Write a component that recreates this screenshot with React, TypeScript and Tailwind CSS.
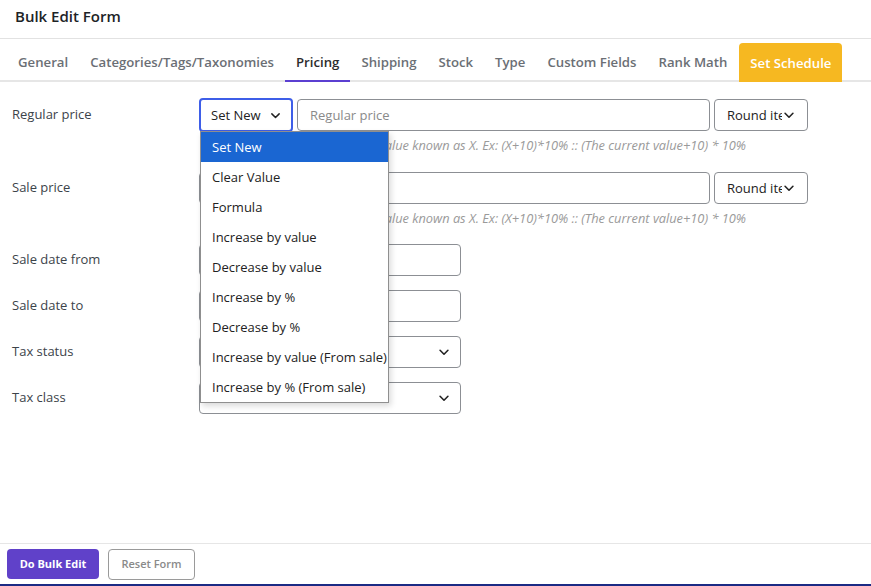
import React from "react";

const Chevron = ({ className = "" }: { className?: string }) => (
  <svg viewBox="0 0 16 16" className={className} fill="none" stroke="currentColor" strokeWidth="1.8" strokeLinecap="round" strokeLinejoin="round">
    <path d="M3.5 6 L8 10.5 L12.5 6" />
  </svg>
);

const tabs = [
  "General",
  "Categories/Tags/Taxonomies",
  "Pricing",
  "Shipping",
  "Stock",
  "Type",
  "Custom Fields",
  "Rank Math",
];

const options = [
  "Set New",
  "Clear Value",
  "Formula",
  "Increase by value",
  "Decrease by value",
  "Increase by %",
  "Decrease by %",
  "Increase by value (From sale)",
  "Increase by % (From sale)",
];

const helper =
  "Use the current value known as X. Ex: (X+10)*10% :: (The current value+10) * 10%";

function PriceRow({ label, placeholder, open }: { label: string; placeholder: string; open?: boolean }) {
  return (
    <div className="flex">
      <div className="w-[187px] h-[32px] flex items-center text-[13px] text-[#3c434a]">{label}</div>
      <div className="flex flex-col w-[609px]">
        <div className="flex h-[32px] items-center">
          <div className="relative">
            <div
              className={
                open
                  ? "w-[94px] h-[34px] -my-[1px] rounded-[4px] border-2 border-[#3e5ee8] flex items-center pl-[10px] pr-[9px] pt-[2px] justify-between text-[13px] text-[#222]"
                  : "w-[94px] h-[32px] rounded-[4px] border border-[#8c8f94] flex items-center pl-[11px] pr-[10px] pt-[2px] justify-between text-[13px] text-[#222]"
              }
            >
              <span>Set New</span>
              <Chevron className="w-[13px] h-[13px] text-[#222] -mt-[2px]" />
            </div>
            {open && (
              <div className="absolute left-[1px] top-[32px] w-[189px] bg-white border border-[#8f8f8f] shadow-[2px_3px_6px_rgba(0,0,0,0.15)] z-10">
                {options.map((o, i) => (
                  <div
                    key={o}
                    className={
                      i === 0
                        ? "h-[30px] flex items-center pl-[11px] pt-[1px] text-[13px] bg-[#1a66d2] text-white whitespace-nowrap"
                        : "h-[30px] flex items-center pl-[11px] pt-[1px] text-[13px] text-[#222] whitespace-nowrap"
                    }
                  >
                    {o}
                  </div>
                ))}
              </div>
            )}
          </div>
          <div className="ml-[4px] w-[413px] h-[32px] rounded-[4px] border border-[#8c8f94] flex items-center pl-[12px] pt-[1px] text-[13px] text-[#8a8a8a]">
            {placeholder}
          </div>
          <div className="ml-[4px] w-[94px] h-[32px] rounded-[4px] border border-[#8c8f94] flex items-center pl-[12px] pt-[2px] text-[13px] text-[#222]">
            <span className="w-[55px] overflow-hidden whitespace-nowrap">Round items</span>
            <Chevron className="w-[14px] h-[14px] text-[#222] -mt-[3px]" />
          </div>
        </div>
        <div className="mt-[5px] h-[18px] text-[12.8px] italic text-[#9a9a9a] whitespace-nowrap leading-[18px] text-right pr-[62px]">
          {helper}
        </div>
      </div>
    </div>
  );
}

function SimpleRow({ label, select }: { label: string; select?: boolean }) {
  return (
    <div className="flex">
      <div className="w-[187px] h-[32px] flex items-center text-[13px] text-[#3c434a]">{label}</div>
      <div className="w-[262px] h-[32px] rounded-[4px] border border-[#8c8f94] flex items-center justify-end pr-[9px]">
        {select && <Chevron className="w-[14px] h-[14px] text-[#222]" />}
      </div>
    </div>
  );
}

export default function App() {
  return (
    <div
      className="w-[871px] h-[586px] bg-white flex flex-col overflow-hidden"
      style={{ fontFamily: '"Open Sans", "Noto Sans", sans-serif' }}
    >
      <div className="h-[39px] border-b border-[#e2e2e2] flex items-center pl-[15px] pb-[6px]">
        <span className="text-[15px] font-semibold text-[#1d2327]">Bulk Edit Form</span>
      </div>
      <div className="h-[43px] border-b-2 border-[#e6e6e6] flex items-end pl-[7px]">
        {tabs.map((t) => (
          <div
            key={t}
            className={
              t === "Pricing"
                ? "h-[42px] -mb-[2px] px-[11px] flex items-center text-[13.2px] font-semibold text-[#2c2c2c] border-b-2 border-[#5b3fd1] pt-[5px]"
                : "h-[42px] px-[11px] flex items-center text-[13.2px] font-semibold text-[#6b6f75] pt-[4px] -mb-[2px]"
            }
          >
            {t}
          </div>
        ))}
        <div className="ml-[1px] h-[39px] -mb-[2px] px-[11px] pt-[2px] flex items-center rounded-t-[4px] bg-[#f6b821] text-[13.2px] font-semibold text-white">
          Set Schedule
        </div>
      </div>
      <div className="flex-1 pl-[12px] pt-[17px]">
        <PriceRow label="Regular price" placeholder="Regular price" open />
        <div className="mt-[18px]">
          <PriceRow label="Sale price" placeholder="Sale price" />
        </div>
        <div className="mt-[17px] flex flex-col gap-[14px]">
          <SimpleRow label="Sale date from" />
          <SimpleRow label="Sale date to" />
          <SimpleRow label="Tax status" select />
          <SimpleRow label="Tax class" select />
        </div>
      </div>
      <div className="h-[41px] border-t border-[#e6e6e6] flex items-start pt-[5px] pl-[7px] gap-[9px]">
        <button className="h-[30px] w-[92px] rounded-[4px] bg-[#6041c9] text-white text-[11px] font-bold">
          Do Bulk Edit
        </button>
        <button className="h-[31px] w-[87px] rounded-[4px] border border-[#9a9a9a] bg-white text-[#8a8a8a] text-[11px] font-semibold">
          Reset Form
        </button>
      </div>
      <div className="h-[2px] bg-[#1b2a84]" />
    </div>
  );
}
